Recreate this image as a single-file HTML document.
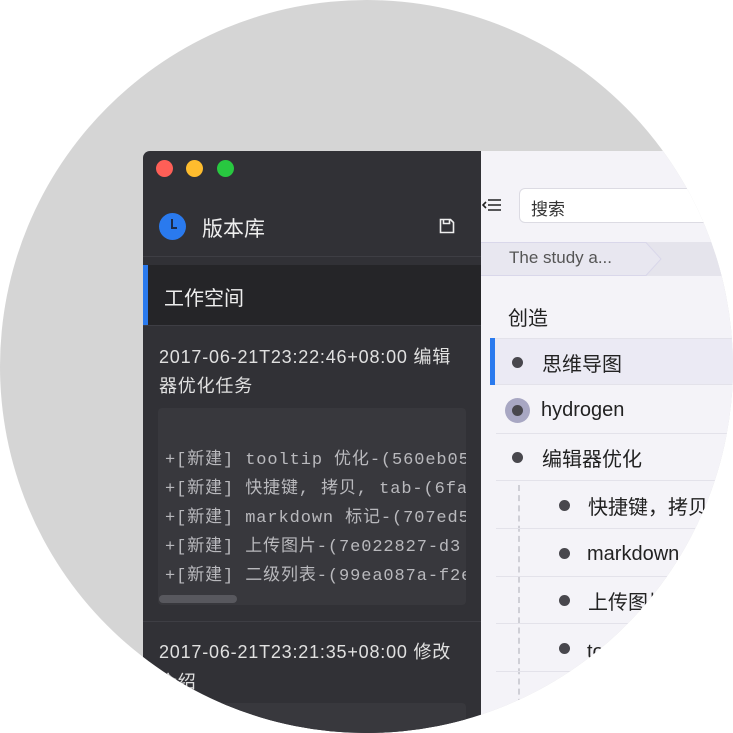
<!DOCTYPE html>
<html><head><meta charset="utf-8"><style>
*{margin:0;padding:0;box-sizing:border-box}
body{width:733px;height:733px;background:#fff;overflow:hidden;font-family:"Liberation Sans","Noto Sans CJK SC",sans-serif}
#c{position:absolute;left:0;top:0;width:733px;height:733px;border-radius:50%;overflow:hidden;background:#d5d5d5}
.a{position:absolute}
#side{left:143px;top:151px;width:338px;height:600px;background:#313136;border-top-left-radius:7px}
#main{left:481px;top:151px;width:300px;height:600px;background:#f4f3f8}
.dot{position:absolute;width:17px;height:17px;border-radius:50%;top:9px}
.t{position:absolute;white-space:nowrap}
.code{font-family:"Liberation Mono","Noto Sans CJK SC",monospace;font-size:17px;color:#b9b9bd;letter-spacing:0.9px}
.sep{position:absolute;height:1px;background:#e3e2ea;left:15px;width:300px}
.b{position:absolute;width:11px;height:11px;border-radius:50%;background:#48474d}
.rt{position:absolute;font-size:20px;color:#222;white-space:nowrap}
</style></head><body><div id="c">
<div class="a" id="side">
 <div class="dot" style="left:13px;background:#fe5f57"></div>
 <div class="dot" style="left:43px;background:#febc2e"></div>
 <div class="dot" style="left:74px;background:#28c840"></div>
 <div class="a" style="left:16px;top:62px;width:27px;height:27px;border-radius:50%;background:#2a7aee"></div>
 <div class="a" style="left:28px;top:68px;width:2px;height:9px;background:#1c2b48"></div>
 <div class="a" style="left:28px;top:76px;width:6px;height:2px;background:#1c2b48"></div>
 <div class="t" style="left:59px;top:62px;font-size:21px;color:#eee">版本库</div>
 <svg class="a" style="left:296px;top:67px" width="16" height="16" viewBox="0 0 16 16"><path d="M1.5 1.5h10l3 3v10h-13z M4.5 1.5v4h6v-4" fill="none" stroke="#eee" stroke-width="1.6"/></svg>
 <div class="a" style="left:0;top:105px;width:338px;height:1px;background:#3e3e44"></div>
 <div class="a" style="left:0;top:114px;width:338px;height:60px;background:#252528"></div>
 <div class="a" style="left:0;top:114px;width:5px;height:60px;background:#2a7aee"></div>
 <div class="t" style="left:21px;top:131px;font-size:20px;color:#eee">工作空间</div>
 <div class="a" style="left:0;top:174px;width:338px;height:1px;background:#3e3e44"></div>
 <div class="t" style="left:16px;top:192px;font-size:18px;letter-spacing:0.8px;color:#e0e0e0;line-height:29px">2017-06-21T23:22:46+08:00 编辑<br>器优化任务</div>
 <div class="a" style="left:15px;top:257px;width:308px;height:197px;background:#38383d;border-radius:4px;overflow:hidden">
  <div class="t code" style="left:7px;top:38px;line-height:29px">+[新建] tooltip 优化-(560eb05<br>+[新建] 快捷键, 拷贝, tab-(6fa2<br>+[新建] markdown 标记-(707ed5<br>+[新建] 上传图片-(7e022827-d3<br>+[新建] 二级列表-(99ea087a-f2e</div>
  <div class="a" style="left:1px;top:187px;width:78px;height:8px;border-radius:4px;background:#58585e"></div>
 </div>
 <div class="a" style="left:0;top:470px;width:338px;height:1px;background:#3e3e44"></div>
 <div class="t" style="left:16px;top:486px;font-size:18px;letter-spacing:0.8px;color:#e0e0e0;line-height:30px">2017-06-21T23:21:35+08:00 修改<br>介绍</div>
 <div class="a" style="left:15px;top:552px;width:308px;height:60px;background:#38383d;border-radius:4px"></div>
</div>
<div class="a" id="main">
 <svg class="a" style="left:1px;top:46px" width="20" height="16" viewBox="0 0 20 16"><path d="M6 3h13M6 8h13M6 13h13M4 5l-3 3 3 3" fill="none" stroke="#222" stroke-width="1.6"/></svg>
 <div class="a" style="left:38px;top:37px;width:240px;height:35px;background:#fff;border:1px solid #dcdbe3;border-radius:6px"></div>
 <div class="t" style="left:50px;top:44px;font-size:17px;color:#333">搜索</div>
 <div class="a" style="left:0;top:91px;width:300px;height:34px;background:#e5e4ec"></div>
 <svg class="a" style="left:0;top:91px" width="200" height="34"><path d="M0 0.5H165L180 17L165 33.5H0" fill="#e8e7f0" stroke="#d9d7ea" stroke-width="1"/></svg>
 <div class="t" style="left:28px;top:97px;font-size:17px;color:#555">The study a...</div>
 <div class="rt" style="left:27px;top:151px">创造</div>
 <div class="a" style="left:9px;top:187px;width:300px;height:47px;background:#ebeaf4;border-top:1px solid #e3e2ea;border-bottom:1px solid #e3e2ea"></div>
 <div class="a" style="left:9px;top:187px;width:5px;height:47px;background:#2a7aee"></div>
 <div class="b" style="left:31px;top:206px"></div>
 <div class="rt" style="left:61px;top:197px">思维导图</div>
 <div class="a" style="left:24px;top:247px;width:25px;height:25px;border-radius:50%;background:#a8a7c3"></div>
 <div class="b" style="left:31px;top:254px"></div>
 <div class="rt" style="left:60px;top:248px">hydrogen</div>
 <div class="sep" style="top:282px"></div>
 <div class="b" style="left:31px;top:301px"></div>
 <div class="rt" style="left:61px;top:292px">编辑器优化</div>
 <div class="sep" style="top:329px"></div>
 <div class="a" style="left:37px;top:334px;width:0;height:230px;border-left:2px dashed #cfcfd6"></div>
 <div class="b" style="left:78px;top:349px"></div><div class="rt" style="left:107px;top:340px">快捷键，拷贝，tab</div>
 <div class="sep" style="top:377px"></div>
 <div class="b" style="left:78px;top:397px"></div><div class="rt" style="left:106px;top:386px">markdown 标记</div>
 <div class="sep" style="top:425px"></div>
 <div class="b" style="left:78px;top:444px"></div><div class="rt" style="left:107px;top:435px">上传图片</div>
 <div class="sep" style="top:472px"></div>
 <div class="b" style="left:78px;top:492px"></div><div class="rt" style="left:106px;top:484px">tooltip 优化</div>
 <div class="sep" style="top:520px"></div>
</div>
</div></body></html>
